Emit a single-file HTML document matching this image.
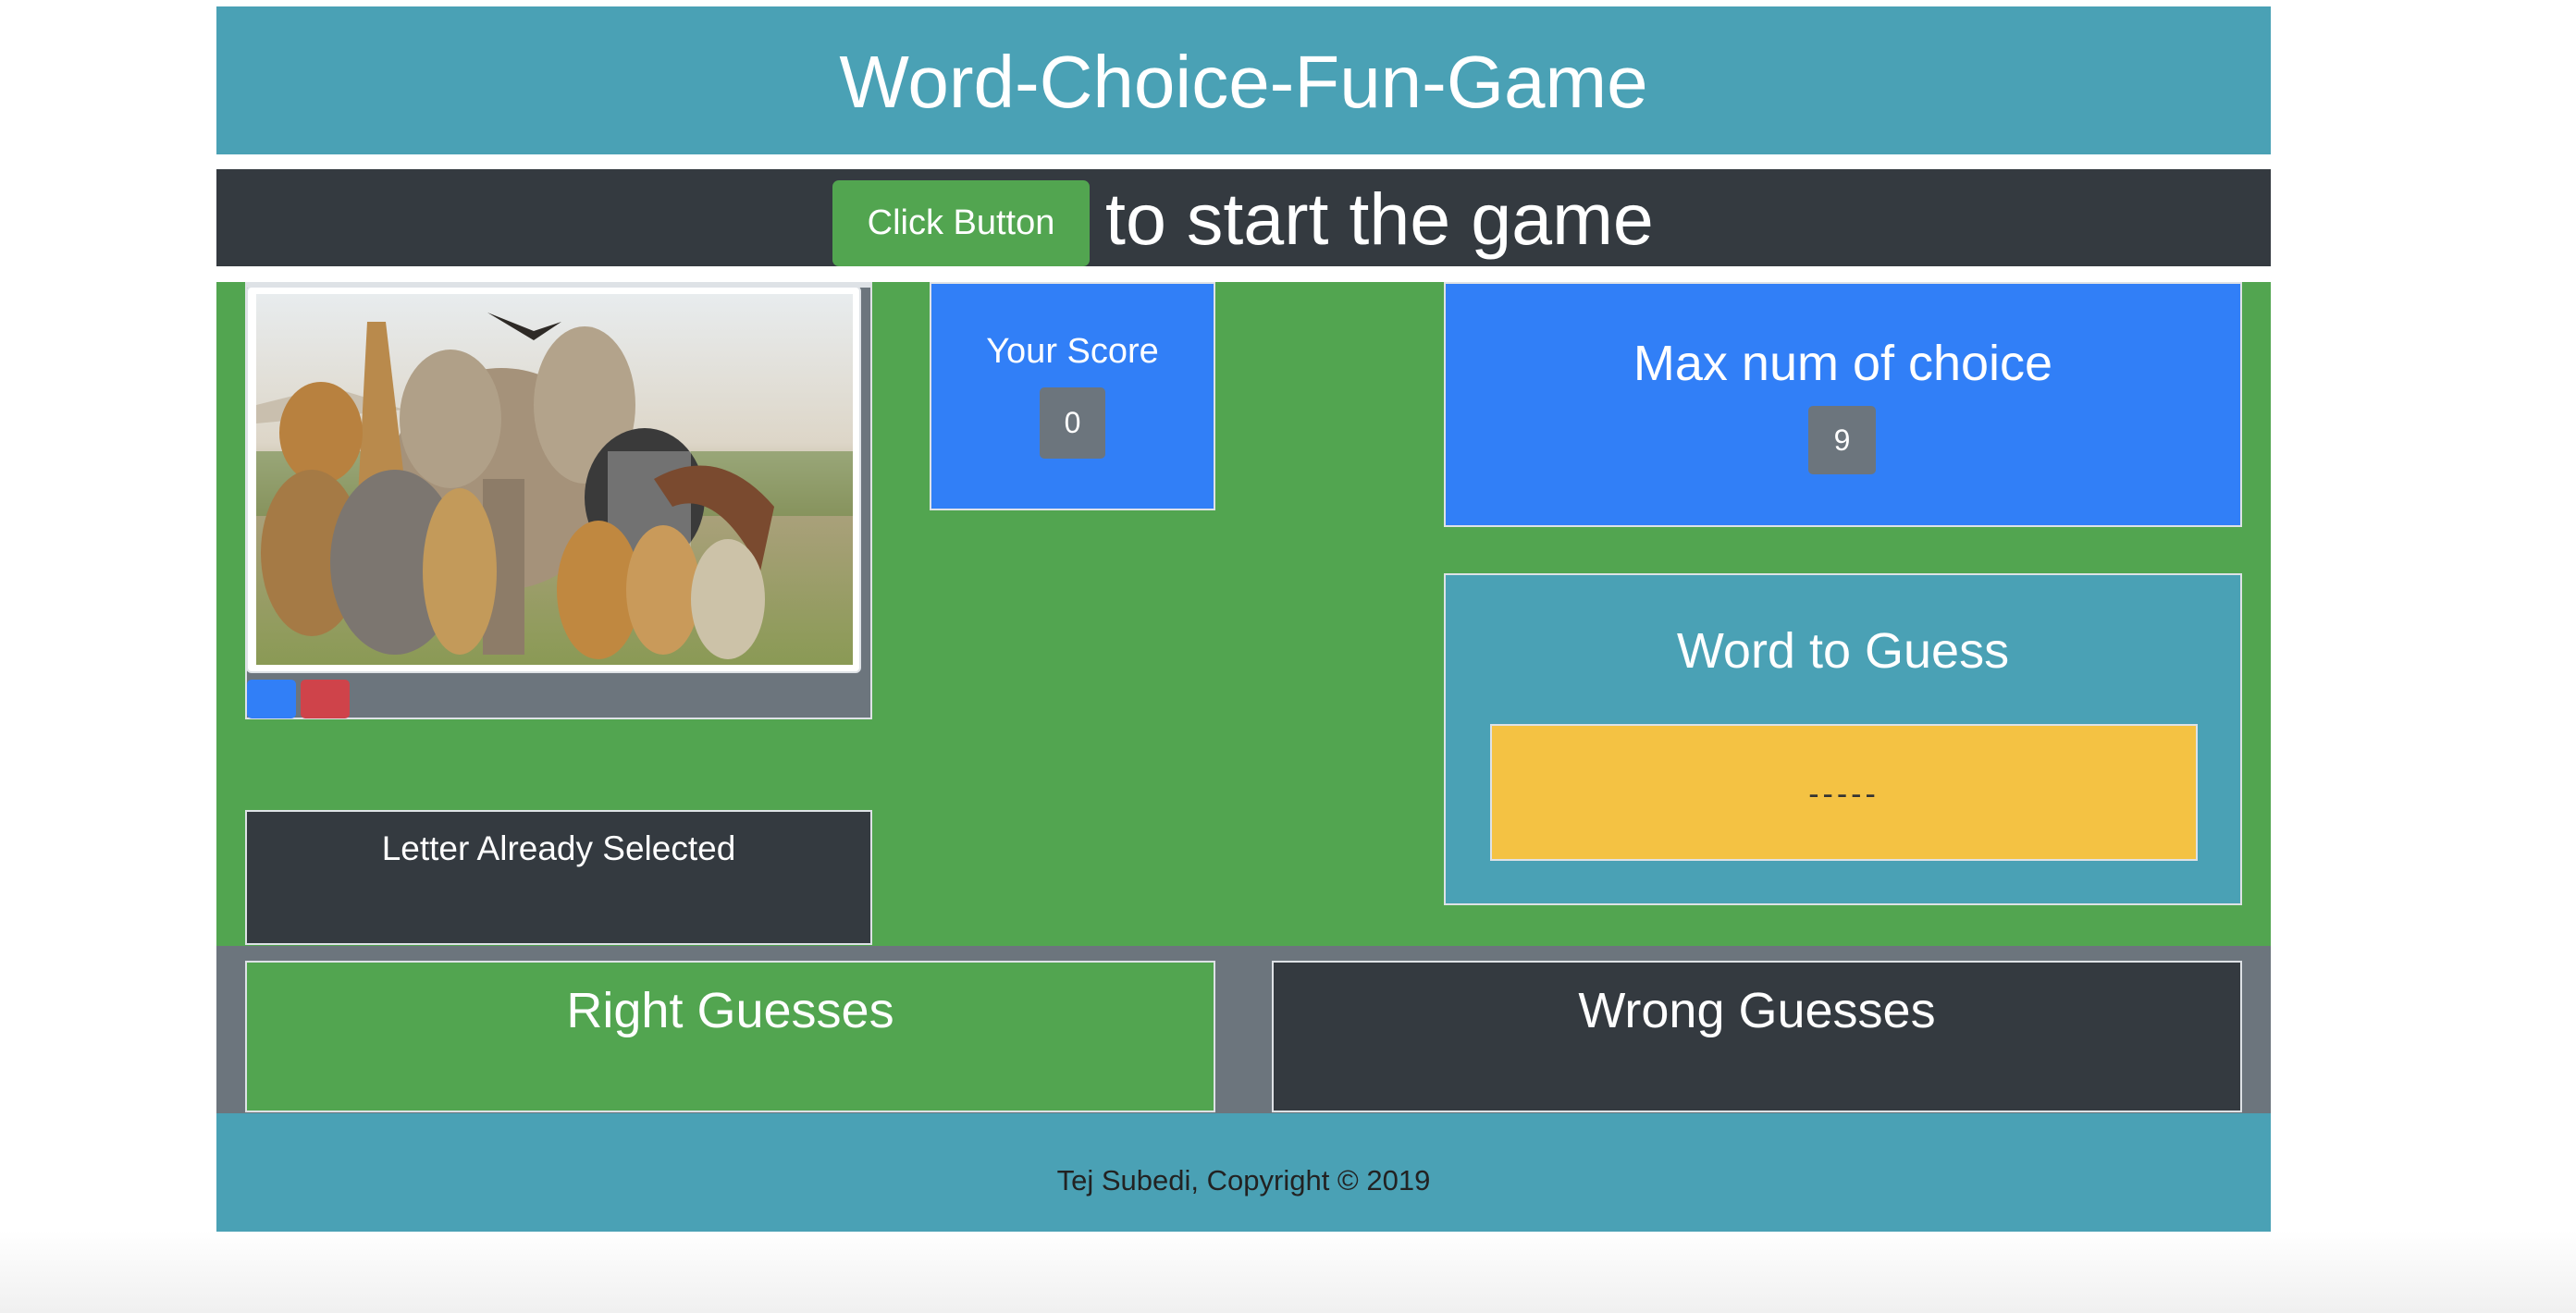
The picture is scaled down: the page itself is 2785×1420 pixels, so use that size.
<!DOCTYPE html>
<html><head><meta charset="utf-8"><style>
*{margin:0;padding:0;box-sizing:border-box}
body{width:2785px;height:1420px;background:#fff;position:relative;overflow:hidden;font-family:"Liberation Sans",sans-serif;color:#fff}
.a{position:absolute}
.bx{position:absolute;border:2px solid #dee2e6}
.c{position:absolute;left:0;right:0;text-align:center}
</style></head><body>
<div class="a" style="left:0;top:1330px;width:2785px;height:90px;background:linear-gradient(#fff,#f0f0f0)"></div>
<div class="a" style="left:234px;top:7px;width:2221px;height:160px;background:#4aa1b5">
  <div class="c" style="top:37px;font-size:80px;line-height:90px">Word-Choice-Fun-Game</div>
</div>
<div class="a" style="left:234px;top:183px;width:2221px;height:105px;background:#343a40"></div>
<div class="a" style="left:900px;top:195px;width:278px;height:93px;background:#52a550;border-radius:7px;font-size:38px;line-height:93px;text-align:center">Click Button</div>
<div class="a" style="left:1195px;top:189px;font-size:79px;line-height:95px;white-space:nowrap">to start the game</div>

<div class="a" style="left:234px;top:305px;width:2221px;height:718px;background:#52a550"></div>
<div class="a" style="left:265px;top:305px;width:678px;height:473px;background:#6c757d;border:2px solid #dee2e6;border-top-width:6px"></div>
<div class="a" style="left:266px;top:309px;width:665px;height:419px;background:#fff;border-radius:6px;border:2px solid #dee2e6"></div>
<svg class="a" style="left:277px;top:318px" width="645" height="401" viewBox="0 0 645 401">
<defs><linearGradient id="s" x1="0" y1="0" x2="0" y2="1"><stop offset="0" stop-color="#e8ecee"/><stop offset=".4" stop-color="#ddd6c8"/><stop offset=".6" stop-color="#a9a07a"/><stop offset="1" stop-color="#8a9a55"/></linearGradient></defs>
<rect width="645" height="401" fill="url(#s)"/>
<path d="M0 120 L80 100 L160 125 L0 140Z" fill="#c9bfae"/>
<rect x="0" y="170" width="645" height="70" fill="#6f8a4a" opacity=".6"/>
<ellipse cx="265" cy="200" rx="120" ry="120" fill="#a5927a"/>
<ellipse cx="210" cy="135" rx="55" ry="75" fill="#b0a088"/>
<ellipse cx="355" cy="120" rx="55" ry="85" fill="#b3a38b"/>
<rect x="245" y="200" width="45" height="190" fill="#8d7c68"/>
<path d="M120 30 L140 30 L160 200 L110 220Z" fill="#b98a4c"/>
<ellipse cx="70" cy="150" rx="45" ry="55" fill="#b8813f"/>
<ellipse cx="60" cy="280" rx="55" ry="90" fill="#a57a45"/>
<ellipse cx="150" cy="290" rx="70" ry="100" fill="#7c7670"/>
<ellipse cx="220" cy="300" rx="40" ry="90" fill="#c39a5a"/>
<ellipse cx="420" cy="220" rx="65" ry="75" fill="#3a3a3a"/>
<path d="M380 170 L470 170 L470 280 L380 280Z" fill="#ddd" opacity=".35"/>
<ellipse cx="370" cy="320" rx="45" ry="75" fill="#c08840"/>
<ellipse cx="440" cy="320" rx="40" ry="70" fill="#c99a5a"/>
<path d="M430 200 Q500 160 560 230 L545 300 Q500 210 450 230Z" fill="#7a4a2f"/>
<ellipse cx="510" cy="330" rx="40" ry="65" fill="#ccc2a8"/>
<path d="M250 20 L300 40 L330 30 L300 50Z" fill="#2e2a26"/>
</svg>
<div class="a" style="left:325px;top:735px;width:53px;height:42px;background:#cf434a;border-radius:5px"></div>
<div class="a" style="left:267px;top:735px;width:53px;height:42px;background:#317ff7;border-radius:5px"></div>

<div class="bx" style="left:1005px;top:305px;width:309px;height:247px;background:#317ff7">
  <div class="c" style="top:50px;font-size:38px;line-height:46px">Your Score</div>
  <div class="a" style="left:117px;top:112px;width:71px;height:77px;background:#6c757d;border-radius:5px;font-size:32px;line-height:77px;text-align:center">0</div>
</div>
<div class="bx" style="left:1561px;top:305px;width:863px;height:265px;background:#317ff7">
  <div class="c" style="top:54px;font-size:54px;line-height:64px">Max num of choice</div>
  <div class="a" style="left:392px;top:132px;width:73px;height:74px;background:#6c757d;border-radius:5px;font-size:32px;line-height:74px;text-align:center">9</div>
</div>
<div class="bx" style="left:1561px;top:620px;width:863px;height:359px;background:#4aa1b5">
  <div class="c" style="top:50px;font-size:54px;line-height:64px">Word to Guess</div>
  <div class="bx" style="left:48px;top:161px;width:765px;height:148px;background:#f4c243;color:#333;font-size:34px;line-height:148px;text-align:center;letter-spacing:4px">-----</div>
</div>
<div class="bx" style="left:265px;top:876px;width:678px;height:146px;background:#343a40">
  <div class="c" style="top:18px;font-size:37px;line-height:44px">Letter Already Selected</div>
</div>

<div class="a" style="left:234px;top:1023px;width:2221px;height:181px;background:#6c757d"></div>
<div class="bx" style="left:265px;top:1039px;width:1049px;height:164px;background:#52a550">
  <div class="c" style="top:20px;font-size:54px;line-height:64px">Right Guesses</div>
</div>
<div class="bx" style="left:1375px;top:1039px;width:1049px;height:164px;background:#343a40">
  <div class="c" style="top:20px;font-size:54px;line-height:64px">Wrong Guesses</div>
</div>
<div class="a" style="left:234px;top:1204px;width:2221px;height:128px;background:#4aa1b5">
  <div class="c" style="top:54px;font-size:31px;line-height:38px;color:#222">Tej Subedi, Copyright © 2019</div>
</div>
</body></html>
